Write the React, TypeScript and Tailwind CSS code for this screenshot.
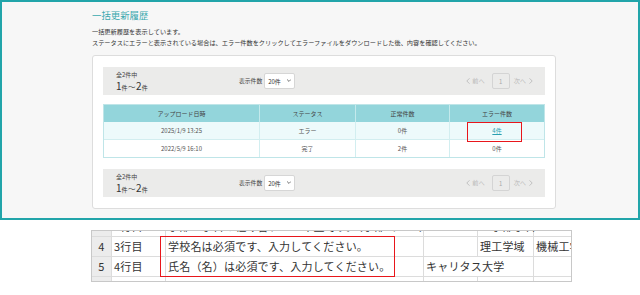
import React from "react";

function Chevron({ dir, className }: { dir: "l" | "r" | "d"; className?: string }) {
  const pts = dir === "l" ? "4,0.5 1,3.5 4,6.5" : dir === "r" ? "1,0.5 4,3.5 1,6.5" : "0.5,1 3,3.5 5.5,1";
  const vb = dir === "d" ? "0 0 6 5" : "0 0 5 7";
  return (
    <svg viewBox={vb} className={className} fill="none" stroke="currentColor" strokeWidth="1.1" strokeLinecap="round" strokeLinejoin="round">
      <polyline points={pts} />
    </svg>
  );
}

function Bar() {
  return (
    <div className="h-[28px] bg-[#ebebea] flex items-stretch pl-[13px] pr-[12px]">
      <div className="w-[123px] pt-[4px]">
        <div className="text-[6px] leading-[7px] text-[#444]">全2件中</div>
        <div className="mt-[2px] h-[12px] leading-[12px] text-[#333] flex items-baseline">
          <span className="text-[10px]">1</span>
          <span className="text-[6px]">件</span>
          <span className="text-[7.5px] mx-[0.5px]">～</span>
          <span className="text-[10px]">2</span>
          <span className="text-[6px]">件</span>
        </div>
      </div>
      <div className="flex items-center">
        <span className="text-[5.8px] text-[#444]">表示件数</span>
        <div className="ml-[2px] w-[31px] h-[16px] bg-white border border-[#d6d6d6] rounded-[2px] flex items-center justify-between pl-[3px] pr-[3px]">
          <span className="text-[6px] text-[#333]">20件</span>
          <Chevron dir="d" className="w-[4px] h-[3.5px] text-[#444]" />
        </div>
      </div>
      <div className="ml-auto flex items-center text-[6.2px] text-[#bbbbbb]">
        <Chevron dir="l" className="w-[4px] h-[6px]" />
        <span className="ml-[2px]">前へ</span>
        <div className="ml-[7px] w-[18px] h-[16px] border border-[#d4d4d4] rounded-[2px] flex items-center justify-center text-[6px] text-[#aaa]">1</div>
        <span className="ml-[4px]">次へ</span>
        <Chevron dir="r" className="ml-[3px] w-[4px] h-[6px]" />
      </div>
    </div>
  );
}

function SheetCell({ w, children, br = true, head = false, align = "left" }: { w: string; children?: React.ReactNode; br?: boolean; head?: boolean; align?: "left" | "center" }) {
  return (
    <div
      className={[
        w,
        "h-full shrink-0 border-b border-[#dcdcdc] whitespace-nowrap flex items-center",
        br ? "border-r" : "",
        head ? "bg-[#ececec] justify-center" : "",
        !head && align === "left" ? "pl-[2px]" : "",
      ].join(" ")}
    >
      {children}
    </div>
  );
}

function SheetRow({ cells, hideDBorder = false }: { cells: (React.ReactNode | undefined)[]; hideDBorder?: boolean }) {
  return (
    <div className="flex h-[20px]">
      <SheetCell w="w-[20px]" head>{cells[0]}</SheetCell>
      <SheetCell w="w-[54px]">{cells[1]}</SheetCell>
      <SheetCell w="w-[258px]">{cells[2]}</SheetCell>
      <SheetCell w="w-[54px]" br={!hideDBorder}>{cells[3]}</SheetCell>
      <SheetCell w="w-[56px]">{cells[4]}</SheetCell>
      <SheetCell w="w-[39px]" br={false}>{cells[5]}</SheetCell>
    </div>
  );
}

export default function App() {
  return (
    <div className="w-[640px] h-[295px] bg-white overflow-hidden font-['Noto_Sans_CJK_JP','Noto_Sans',sans-serif]">
      {/* Web page screenshot */}
      <div className="h-[220px] border-2 border-[#22a5aa] bg-[#f7f7f7] pl-[90px] pt-[7px]">
        <div className="text-[9.4px] leading-[12px] text-[#3aa8ae]">一括更新履歴</div>
        <div className="mt-[6px] text-[6.2px] leading-[10.5px] text-[#333]">
          <div>一括更新履歴を表示しています。</div>
          <div>ステータスにエラーと表示されている場合は、エラー件数をクリックしてエラーファイルをダウンロードした後、内容を確認してください。</div>
        </div>
        <div className="mt-[7px] w-[464px] bg-white border border-[#dddddd] rounded-[3px] px-[10px] pt-[11px] pb-[11px]">
          <Bar />
          <div className="mt-[9px] border border-[#bfe5e8]">
            <div className="grid grid-cols-[156px_96px_94px_1fr] h-[17px] bg-[#93d5db] text-[6px] text-[#444]">
              <div className="flex items-center justify-center border-r border-[#c4e9ec]">アップロード日時</div>
              <div className="flex items-center justify-center border-r border-[#c4e9ec]">ステータス</div>
              <div className="flex items-center justify-center border-r border-[#c4e9ec]">正常件数</div>
              <div className="flex items-center justify-center">エラー件数</div>
            </div>
            <div className="grid grid-cols-[156px_96px_94px_1fr] h-[18px] bg-[#edfafb] text-[6px] text-[#555] border-b border-[#d2eef0]">
              <div className="flex items-center justify-center border-r border-[#d2eef0]">2025/1/9 13:25</div>
              <div className="flex items-center justify-center border-r border-[#d2eef0]">エラー</div>
              <div className="flex items-center justify-center border-r border-[#d2eef0]">0件</div>
              <div className="relative flex items-center justify-center">
                <span className="text-[#2a9fb0] underline">4件</span>
                <div className="absolute left-[17px] top-[0px] w-[55px] h-[20px] border border-[#e8161b]" />
              </div>
            </div>
            <div className="grid grid-cols-[156px_96px_94px_1fr] h-[17px] bg-white text-[6px] text-[#555]">
              <div className="flex items-center justify-center border-r border-[#d2eef0]">2022/5/9 16:10</div>
              <div className="flex items-center justify-center border-r border-[#d2eef0]">完了</div>
              <div className="flex items-center justify-center border-r border-[#d2eef0]">2件</div>
              <div className="flex items-center justify-center">0件</div>
            </div>
          </div>
          <div className="mt-[11px]">
            <Bar />
          </div>
        </div>
      </div>

      {/* Spreadsheet excerpt */}
      <div className="mt-[10px] ml-[91px] w-[481px] relative">
        <div className="border border-[#c8c8c8] overflow-hidden text-[11px] text-[#333] tracking-[0.2px]">
          <div className="h-[6px] overflow-hidden">
            <div className="-mt-[14px]">
              <SheetRow cells={["3", "2行目", "学部・学科の組み合わせが不正です。（学部コード）", "12345678", "工学部学科", ""]} />
            </div>
          </div>
          <SheetRow cells={["4", "3行目", "学校名は必須です、入力してください。", "", "理工学域", "機械工学類"]} />
          <SheetRow hideDBorder cells={["5", "4行目", "氏名（名）は必須です、入力してください。", <span className="relative z-10">キャリタス大学</span>, "", ""]} />
          <div className="h-[4px] overflow-hidden">
            <SheetRow cells={["", "", "", "", "", ""]} />
          </div>
        </div>
        <div className="absolute left-[69px] top-[6px] w-[235px] h-[41px] border-[1.5px] border-[#e8161b]" />
      </div>
    </div>
  );
}
